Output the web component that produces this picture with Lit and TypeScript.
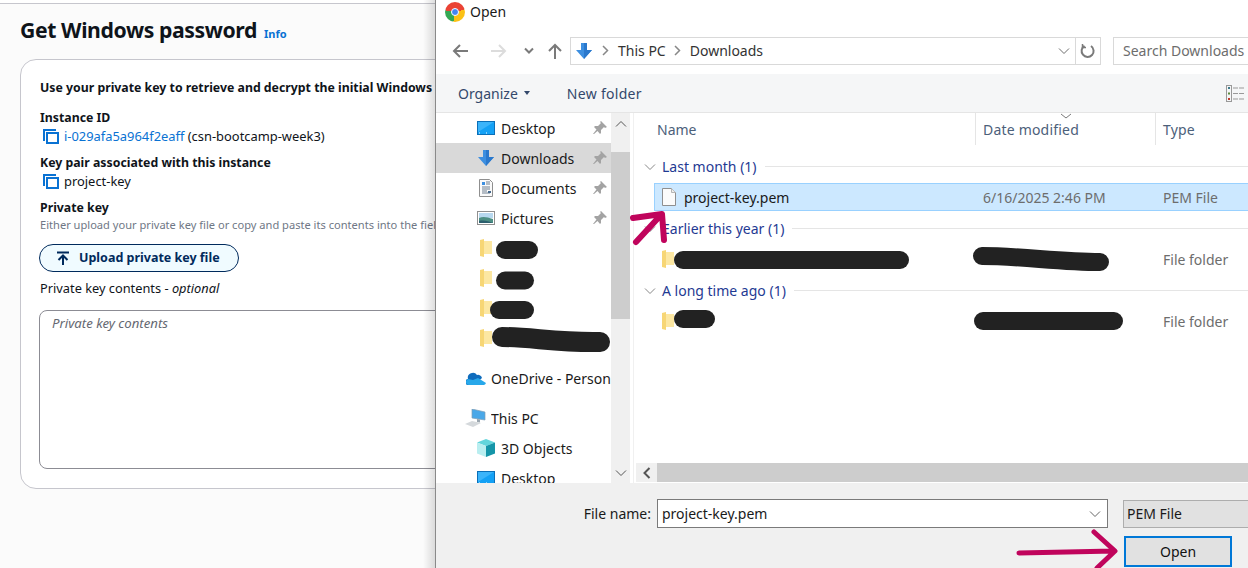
import { LitElement, html, css, svg } from "lit";
import { customElement } from "lit/decorators.js";

const copyIcon = html`<svg class="copy" width="16" height="16" viewBox="0 0 16 16" fill="none" stroke="#0972d3" stroke-width="2"><path d="M1 13V2h12"/><rect x="4" y="5" width="11" height="10"/></svg>`;

const blueArrow = html`<svg width="18" height="18" viewBox="0 0 18 18"><path d="M6 1h6v7h5l-8 9-8-9h5z" fill="#3d8fe0"/><path d="M9 1h3v7h5l-8 9z" fill="#2a78cc"/></svg>`;

const desktopIcon = html`<svg width="18" height="14" viewBox="0 0 18 14"><rect x=".5" y=".5" width="17" height="13" fill="#14a1f5" stroke="#0b6fb8"/><path d="M2 12h14" stroke="#fff" stroke-width="1" stroke-dasharray="1 6"/><path d="M1 1h16L1 11z" fill="#3bb4fa"/></svg>`;

const docIcon = html`<svg width="14" height="18" viewBox="0 0 14 18"><path d="M.5.5h10l3 3v14H.5z" fill="#fafafa" stroke="#8f8f8f"/><path d="M3 3h3v3H3z" fill="#3d8fe0"/><path d="M7 3h4M7 5h4M3 8h8M3 10h8M3 12h5M3 14h8" stroke="#6f7f8f"/><path d="M9 12h3v2H9z" fill="#43688c"/></svg>`;

const picIcon = html`<svg width="18" height="14" viewBox="0 0 18 14"><rect x=".5" y=".5" width="17" height="13" fill="#fff" stroke="#8f8f8f"/><rect x="2" y="2" width="14" height="5" fill="#b7d8ef"/><path d="M2 7c4-2 8-1 14 1v4H2z" fill="#4d8f84"/><path d="M2 10c5-1 9 0 14 2H2z" fill="#2c5f6e"/></svg>`;

const folderIcon = html`<svg width="12" height="18" viewBox="0 0 12 18"><path d="M0 1l4-1v18l-4-1z" fill="#f7d675"/><path d="M4 2h8v13H4z" fill="#fce7a2"/></svg>`;

const pinIcon = html`<svg width="14" height="14" viewBox="0 0 14 14"><path d="M8 0l6 6-2 1-1-1-3 3v3l-1 1-2.500-3L1 13l-1 0 3.500-4.500L1 6l1-1h3l3-3-1-1z" fill="#a3a3a3"/></svg>`;

const cloudIcon = html`<svg width="20" height="13" viewBox="0 0 20 13"><path d="M3 13a3 3 0 0 1-1-6 5 5 0 0 1 9-4 4 4 0 0 1 5 3l-8 7z" fill="#0f6cbd"/><path d="M3 13a3 3 0 0 1-3-3 3 3 0 0 1 2-3l5 1 5-2 8 5a3 3 0 0 1-2 2z" fill="#28a8ea"/></svg>`;

const pcIcon = html`<svg width="22" height="18" viewBox="0 0 22 18"><path d="M7 0l13 3v8L7 9z" fill="#4aa8e8" stroke="#7f9db5" stroke-width=".7"/><path d="M12 10l3 .5v3l-3-.5z" fill="#9aa5ae"/><path d="M0 15l7-3 9 2-8 4z" fill="#d5d9dc"/></svg>`;

const cubeIcon = html`<svg width="18" height="18" viewBox="0 0 18 18"><path d="M9 0l9 3.500L9 7 0 3.500z" fill="#62d5dc"/><path d="M0 3.500L9 7v11l-9-3.500z" fill="#b9eef0"/><path d="M18 3.500L9 7v11l9-3.500z" fill="#1595a8"/></svg>`;

const chevron = (cls: string, d: string) =>
  html`<svg class=${cls} width="12" height="8" viewBox="0 0 12 8" fill="none" stroke="currentColor"><path d=${d}/></svg>`;

const crumb = (cls: string) =>
  html`<svg class=${cls} width="7" height="11" viewBox="0 0 7 11" fill="none" stroke="#888" stroke-width="1.500"><path d="M1 1l4.500 4.500L1 10"/></svg>`;

const fileIcon = html`<svg width="14" height="18" viewBox="0 0 14 18"><path d="M.5.500h9l4 4v13H.5z" fill="#fbfbfb" stroke="#8f8f8f"/><path d="M9.500.500v4h4" fill="#eee" stroke="#b5b5b5"/></svg>`;

const DOWN = "M1 1.500l5 5 5-5";

interface NavItem { label?: string; icon?: unknown; indent?: boolean; pin?: boolean; selected?: boolean; gap?: number; }

const NAV: NavItem[] = [
  { label: "Desktop", icon: desktopIcon, indent: true, pin: true },
  { label: "Downloads", icon: blueArrow, indent: true, pin: true, selected: true },
  { label: "Documents", icon: docIcon, indent: true, pin: true },
  { label: "Pictures", icon: picIcon, indent: true, pin: true },
  { icon: folderIcon, indent: true },
  { icon: folderIcon, indent: true },
  { icon: folderIcon, indent: true },
  { icon: folderIcon, indent: true },
  { label: "OneDrive - Person", icon: cloudIcon, gap: 10 },
  { label: "This PC", icon: pcIcon, gap: 10 },
  { label: "3D Objects", icon: cubeIcon, indent: true },
  { label: "Desktop", icon: desktopIcon, indent: true },
];

const GROUPS = [
  { title: "Last month (1)", name: "project-key.pem", date: "6/16/2025 2:46 PM", type: "PEM File", selected: true },
  { title: "Earlier this year (1)", name: "", date: "", type: "File folder", selected: false },
  { title: "A long time ago (1)", name: "", date: "", type: "File folder", selected: false },
];

@customElement("app-root")
export class AppRoot extends LitElement {
  static styles = css`
    :host {
      display: block;
      position: relative;
      width: 1248px;
      height: 568px;
      overflow: hidden;
      background: #fff;
    }
    .screen { display: flex; height: 568px; }

    /* console page behind the dialog */
    .console {
      flex: none;
      width: 435px;
      height: 568px;
      overflow: hidden;
      box-sizing: border-box;
      background: #fbfbfb;
      font-family: "Noto Sans", sans-serif;
      color: #0f141a;
    }
    .top-line { height: 3px; background: #fff; border-bottom: 1px solid #c6c6cd; }
    .heading { display: flex; align-items: baseline; gap: 7px; height: 55px; padding: 9px 0 0 20px; box-sizing: border-box; }
    .heading h1 { margin: 0; font-size: 21.2px; line-height: 34px; font-weight: 700; letter-spacing: -0.4px; white-space: nowrap; }
    .heading a { color: #0972d3; font-size: 11px; font-weight: 700; }
    .card {
      margin-left: 20px;
      width: 700px;
      height: 430px;
      box-sizing: border-box;
      padding: 19px 19px 0;
      background: #fff;
      border: 1px solid #c6c6cd;
      border-radius: 16px;
      font-size: 12.3px;
      line-height: 18px;
    }
    .lead, .label { font-weight: 700; }
    .lead { white-space: nowrap; }
    .field { margin-top: 12px; }
    .field + .field { margin-top: 9px; }
    .value { display: flex; align-items: center; gap: 5px; padding-left: 3px; font-size: 12.9px; }
    .value a { color: #0972d3; }
    .copy { flex: none; }
    .hint { color: #6f7785; font-size: 11.1px; line-height: 16px; white-space: nowrap; }
    .upload {
      display: flex;
      align-items: center;
      gap: 9px;
      width: 200px;
      height: 28px;
      margin: 11px 0 0 -1px;
      padding-left: 16px;
      box-sizing: border-box;
      border: 1px solid #002a5c;
      border-radius: 14px;
      background: #f0fbff;
      color: #002a5c;
      font-weight: 700;
      font-size: 12.5px;
      white-space: nowrap;
    }
    .contents-label { margin-top: 7px; font-size: 12.8px; }
    .contents-label em { font-style: italic; }
    .textarea {
      margin: 13px 0 0 -1px;
      width: 600px;
      height: 159px;
      box-sizing: border-box;
      padding: 3px 12px;
      border: 1px solid #8c8c94;
      border-radius: 8px;
      background: #fff;
      color: #656871;
      font-style: italic;
      font-size: 13.2px;
    }

    /* windows file dialog */
    .dialog {
      position: relative;
      flex: 1;
      min-width: 0;
      display: flex;
      flex-direction: column;
      height: 568px;
      overflow: hidden;
      background: #fff;
      border-left: 1px solid #8a8a8a;
      font-family: "Noto Sans", sans-serif;
      font-size: 14px;
      color: #1a1a1a;
    }
    .shadow {
      position: absolute;
      left: 423px;
      top: 0;
      width: 12px;
      height: 568px;
      background: linear-gradient(to right, rgba(0,0,0,0), rgba(0,0,0,.13));
    }
    .titlebar { flex: none; display: flex; gap: 5px; height: 37px; padding: 2px 0 0 9px; box-sizing: border-box; line-height: 20px; }
    .chrome { position: relative; width: 20px; height: 20px; border-radius: 50%; background: conic-gradient(#ea4335 0 75deg, #fbc116 75deg 190deg, #34a853 190deg 280deg, #ea4335 280deg); }
    .chrome::after { content: ""; position: absolute; left: 5.500px; top: 5.500px; width: 6px; height: 6px; border-radius: 50%; background: #4285f4; border: 1.500px solid #fff; }
    .addressbar { flex: none; display: flex; align-items: flex-start; height: 37px; }
    .navbtns { flex: none; display: flex; width: 134px; height: 28px; align-items: center; color: #7a7a7a; }
    .navbtns svg { flex: none; }
    .back { margin-left: 16px; }
    .forward { margin-left: 23px; }
    .recent { margin-left: 16px; }
    .up { margin-left: 13px; }
    .address {
      flex: none;
      display: flex;
      align-items: center;
      width: 531px;
      height: 28px;
      padding-bottom: 1px;
      box-sizing: border-box;
      border: 1px solid #d9d9d9;
      color: #333;
    }
    .address .here { display: flex; margin-left: 4px; }
    .address .sep { flex: none; margin: 0 9px 0 8px; }
    .address .sep.first { margin: 0 9px; }
    .address .grow { flex: 1; }
    .address .drop { color: #6d6d6d; margin-right: 5px; display: flex; }
    .address .refresh { display: flex; align-items: center; justify-content: center; width: 24px; height: 26px; border-left: 1px solid #d9d9d9; }
    .search {
      flex: none;
      margin-left: 12px;
      width: 150px;
      height: 28px;
      box-sizing: border-box;
      border: 1px solid #d9d9d9;
      border-right: none;
      padding-left: 9px;
      line-height: 26px;
      color: #6d6d6d;
      white-space: nowrap;
    }
    .toolbar {
      flex: none;
      display: flex;
      align-items: center;
      height: 39px;
      box-sizing: border-box;
      padding-left: 22px;
      background: #f5f6f7;
      border-bottom: 1px solid #e5e5e5;
      color: #33486b;
    }
    .organize { display: flex; align-items: center; gap: 6px; }
    .caret { width: 0; height: 0; border: 3.500px solid transparent; border-top: 4px solid #33486b; border-bottom: none; }
    .toolbar .newfolder { margin-left: 37px; letter-spacing: .3px; }
    .toolbar .views { margin-left: auto; margin-right: 4px; }
    .body { flex: 1; min-height: 0; display: flex; }
    .nav { flex: none; width: 175px; overflow: hidden; }
    .nav-row { display: flex; align-items: center; height: 30px; white-space: nowrap; }
    .nav-row.selected { background: #d9d9d9; }
    .nav-row .ico { flex: none; display: flex; justify-content: center; width: 20px; }
    .nav-row.top .ico { margin-left: 29px; width: 22px; margin-right: 4px; }
    .nav-row.indent .ico { margin-left: 40px; margin-right: 5px; }
    .nav-row .name { flex: 1; overflow: hidden; }
    .nav-row .pin { flex: none; margin-right: 4px; display: flex; }
    .vscroll { flex: none; display: flex; flex-direction: column; width: 19px; background: #f0f0f0; color: #555; }
    .vscroll .btn { flex: none; display: flex; align-items: center; justify-content: center; height: 21px; }
    .vscroll .track { flex: 1; padding-top: 18px; }
    .vscroll .thumb { height: 167px; background: #cdcdcd; }
    .divider { flex: none; width: 3px; border-right: 1px solid #f0f0f0; }
    .files { flex: 1; min-width: 0; display: flex; flex-direction: column; padding-left: 2px; }
    .list { flex: 1; min-height: 0; position: relative; overflow: hidden; }
    .cols {
      display: grid;
      grid-template-columns: 339px 180px 1fr;
      height: 33px;
      line-height: 34px;
      color: #4c607a;
    }
    .cols > div { padding-left: 21px; box-sizing: border-box; }
    .cols > div + div { padding-left: 7px; border-left: 1px solid #e5e5e5; height: 32px; letter-spacing: .2px; }
    .sort { position: absolute; left: 424px; top: 0; display: flex; color: #7a7a7a; }
    .group { display: flex; align-items: center; height: 31px; padding-bottom: 2px; box-sizing: border-box; color: #1f3a93; }
    .group-first { margin-top: 6px; }
    .group .tw { flex: none; display: flex; margin-left: 8px; color: #888; }
    .group .title { margin-left: 6px; white-space: nowrap; }
    .group i { flex: 1; height: 1px; margin-left: 8px; background: #e5e5e5; }
    .row {
      display: grid;
      grid-template-columns: 328px 180px 1fr;
      height: 28px;
      margin-left: 18px;
      margin-bottom: 3px;
      box-sizing: border-box;
      align-items: center;
      border: 1px solid transparent;
      border-right: none;
      white-space: nowrap;
      color: #6d6d6d;
    }
    .row.selected { background: #cce8ff; border-color: #99d1ff; }
    .row .fname { display: flex; align-items: center; gap: 8px; padding-left: 7px; color: #1a1a1a; }
    .hscroll { flex: none; display: flex; height: 19px; margin-bottom: 1px; background: #cdcdcd; }
    .hscroll .btn { flex: none; display: flex; align-items: center; justify-content: center; width: 21px; background: #f0f0f0; color: #555; }
    .footer { flex: none; height: 85px; background: #f0f0f0; box-sizing: border-box; padding-top: 16px; }
    .fn-row { display: flex; align-items: center; height: 29px; }
    .fn-label { flex: none; width: 221px; text-align: right; padding-right: 6px; box-sizing: border-box; }
    .fn-input {
      flex: none;
      display: flex;
      align-items: center;
      justify-content: space-between;
      width: 451px;
      height: 29px;
      box-sizing: border-box;
      padding: 0 6px 0 4px;
      background: #fff;
      border: 1px solid #7a7a7a;
      color: #1a1a1a;
    }
    .fn-input svg { color: #666; }
    .fn-type {
      flex: none;
      width: 130px;
      height: 28px;
      margin-left: 15px;
      box-sizing: border-box;
      padding-left: 3px;
      line-height: 26px;
      background: #e1e1e1;
      border: 1px solid #adadad;
      border-right: none;
    }
    .open {
      width: 108px;
      height: 31px;
      margin: 8px 0 0 688px;
      box-sizing: border-box;
      border: 2px solid #0078d7;
      background: #e1e1e1;
      text-align: center;
      line-height: 27px;
      color: #111;
    }

    /* hand drawn markup on top of the screenshot */
    .markup { position: absolute; left: 0; top: 0; pointer-events: none; }
  `;

  render() {
    return html`
      <div class="screen">
        <div class="console">
          <div class="top-line"></div>
          <div class="heading"><h1>Get Windows password</h1><a>Info</a></div>
          <div class="card">
            <div class="lead">Use your private key to retrieve and decrypt the initial Windows</div>
            <div class="field">
              <div class="label">Instance ID</div>
              <div class="value">${copyIcon}<span><a>i-029afa5a964f2eaff</a> (csn-bootcamp-week3)</span></div>
            </div>
            <div class="field">
              <div class="label">Key pair associated with this instance</div>
              <div class="value">${copyIcon}<span>project-key</span></div>
            </div>
            <div class="field">
              <div class="label">Private key</div>
              <div class="hint">Either upload your private key file or copy and paste its contents into the field</div>
            </div>
            <div class="upload">
              <svg width="14" height="14" viewBox="0 0 14 14" fill="none" stroke="#002a5c" stroke-width="2"><path d="M1 1.500h12M7 14V5M2.500 9L7 4.500 11.500 9"/></svg>
              <span>Upload private key file</span>
            </div>
            <div class="contents-label">Private key contents - <em>optional</em></div>
            <div class="textarea">Private key contents</div>
          </div>
        </div>
        <div class="dialog">
          <div class="titlebar"><div class="chrome"></div><span>Open</span></div>
          <div class="addressbar">
            <div class="navbtns">
              <svg class="back" width="16" height="14" viewBox="0 0 16 14" fill="none" stroke="#7a7a7a" stroke-width="2"><path d="M16 7H2M8 1L2 7l6 6"/></svg>
              <svg class="forward" width="16" height="14" viewBox="0 0 16 14" fill="none" stroke="#dcdcdc" stroke-width="2"><path d="M0 7h14M8 1l6 6-6 6"/></svg>
              <svg class="recent" width="12" height="8" viewBox="0 0 12 8" fill="none" stroke="#7a7a7a" stroke-width="2"><path d="M2 1.500l4 4 4-4"/></svg>
              <svg class="up" width="14" height="16" viewBox="0 0 14 16" fill="none" stroke="#7a7a7a" stroke-width="2"><path d="M7 16V2M1 8l6-6 6 6"/></svg>
            </div>
            <div class="address">
              <span class="here">${blueArrow}</span>
              ${crumb("sep first")}<span>This PC</span>
              ${crumb("sep")}<span>Downloads</span>
              <span class="grow"></span>
              <span class="drop">${chevron("", DOWN)}</span>
              <span class="refresh"><svg width="16" height="16" viewBox="0 0 16 16" fill="none" stroke="#7a7a7a" stroke-width="2"><path d="M4.500 2.800A6 6 0 1 0 11 3"/><path d="M2.500 1v3.500H6" stroke-width="1.500"/></svg></span>
            </div>
            <div class="search">Search Downloads</div>
          </div>
          <div class="toolbar">
            <div class="organize">Organize <span class="caret"></span></div>
            <div class="newfolder">New folder</div>
            <svg class="views" width="18" height="17" viewBox="0 0 18 17" fill="none"><rect x=".5" y=".5" width="5" height="16" stroke="#999"/><path d="M2 3h2" stroke="#3d7a8a" stroke-width="2"/><path d="M2 8.500h2" stroke="#5d8a3d" stroke-width="2"/><path d="M2 14h2" stroke="#c0392b" stroke-width="2"/><path d="M7 3h11M7 8.500h11M7 14h11" stroke="#999" stroke-dasharray="5 1"/></svg>
          </div>
          <div class="body">
            <div class="nav">
              ${NAV.map(
                (n) => html`<div
                  class="nav-row ${n.selected ? "selected" : ""} ${n.indent ? "indent" : "top"}"
                  style=${n.gap ? `margin-top:${n.gap}px` : ""}
                >
                  <span class="ico">${n.icon}</span>
                  <span class="name">${n.label ?? ""}</span>
                  ${n.pin ? html`<span class="pin">${pinIcon}</span>` : ""}
                </div>`
              )}
            </div>
            <div class="vscroll">
              <div class="btn">${chevron("", "M1 6.500l5-5 5 5")}</div>
              <div class="track"><div class="thumb"></div></div>
              <div class="btn">${chevron("", DOWN)}</div>
            </div>
            <div class="divider"></div>
            <div class="files">
              <div class="list">
                <div class="cols"><div>Name</div><div>Date modified</div><div>Type</div></div>
                <span class="sort">${chevron("", "M1 1l5 4 5-4")}</span>
                ${GROUPS.map(
                  (g, i) => html`
                    <div class="group ${i === 0 ? "group-first" : ""}">
                      <span class="tw">${chevron("", DOWN)}</span>
                      <span class="title">${g.title}</span><i></i>
                    </div>
                    <div class="row ${g.selected ? "selected" : ""}">
                      <div class="fname">${g.selected ? fileIcon : folderIcon}<span>${g.name}</span></div>
                      <div>${g.date}</div>
                      <div>${g.type}</div>
                    </div>
                  `
                )}
              </div>
              <div class="hscroll"><div class="btn"><svg width="8" height="12" viewBox="0 0 8 12" fill="none" stroke="currentColor" stroke-width="2"><path d="M6.500 1l-5 5 5 5"/></svg></div></div>
            </div>
          </div>
          <div class="footer">
            <div class="fn-row">
              <div class="fn-label">File name:</div>
              <div class="fn-input"><span>project-key.pem</span>${chevron("", DOWN)}</div>
              <div class="fn-type">PEM File</div>
            </div>
            <div class="open">Open</div>
          </div>
        </div>
      </div>
      <div class="shadow"></div>
      <svg class="markup" width="1248" height="568" viewBox="0 0 1248 568" fill="none" stroke-linecap="round" stroke-linejoin="round">
        ${[
          ["M505 250h24", 18],
          ["M505 280.500h20", 18],
          ["M499 310h26", 18],
          ["M502 337C530 337 560 343 600 342", 20],
          ["M683 260H900", 18],
          ["M982 256C1020 256 1060 262 1100 262", 18],
          ["M683 319H706", 18],
          ["M983 321H1114", 18],
        ].map(([d, w]) => svg`<path d=${d} stroke="#222" stroke-width=${w} />`)}
        <path d="M636 242L660 216M633 218L662 214L664 240" stroke="#c0045c" stroke-width="6" />
        <path d="M1019 553L1114 551M1094 532L1115 551L1097 568" stroke="#c0045c" stroke-width="5" />
      </svg>
    `;
  }
}
